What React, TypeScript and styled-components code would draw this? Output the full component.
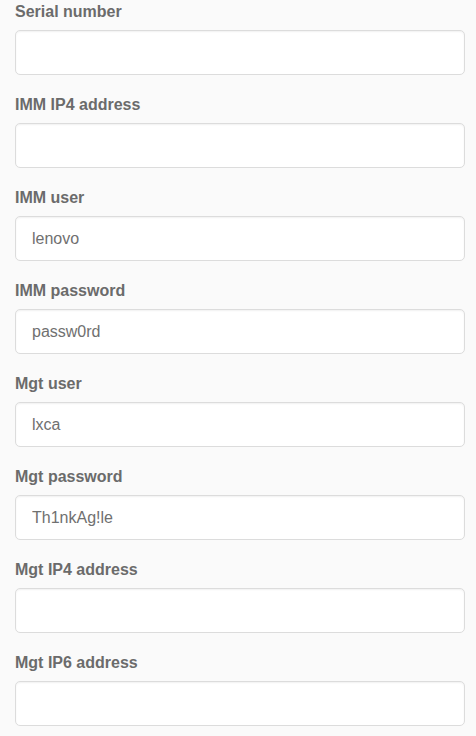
import React from "react";
import styled, { createGlobalStyle } from "styled-components";

const Global = createGlobalStyle`
  html, body { margin: 0; padding: 0; background: #fafafa; }
  body { font-family: "Liberation Sans", Arial, sans-serif; }
  * { box-sizing: border-box; }
`;

const Form = styled.form`
  display: flex;
  flex-direction: column;
  gap: 19px;
  padding: 1px 11px 0 15px;
`;

const Group = styled.div`
  display: flex;
  flex-direction: column;
  gap: 8px;
`;

const Label = styled.label`
  font-size: 16px;
  font-weight: bold;
  line-height: 21px;
  color: #6b6b6b;
`;

const Input = styled.input`
  width: 100%;
  height: 45px;
  padding: 0 16px;
  border: 1px solid #dcdcdc;
  border-radius: 5px;
  background: #fff;
  box-shadow: inset 0 1px 2px rgba(0, 0, 0, 0.06);
  font-family: "Liberation Sans", Arial, sans-serif;
  font-size: 16px;
  color: #707070;
  outline: none;
`;

const fields: [string, string][] = [
  ["Serial number", ""],
  ["IMM IP4 address", ""],
  ["IMM user", "lenovo"],
  ["IMM password", "passw0rd"],
  ["Mgt user", "lxca"],
  ["Mgt password", "Th1nkAg!le"],
  ["Mgt IP4 address", ""],
  ["Mgt IP6 address", ""],
];

export default function App() {
  return (
    <>
      <Global />
      <Form onSubmit={(e) => e.preventDefault()}>
        {fields.map(([label, value], i) => (
          <Group key={i}>
            <Label htmlFor={`f${i}`}>{label}</Label>
            <Input id={`f${i}`} type="text" defaultValue={value} />
          </Group>
        ))}
      </Form>
    </>
  );
}
